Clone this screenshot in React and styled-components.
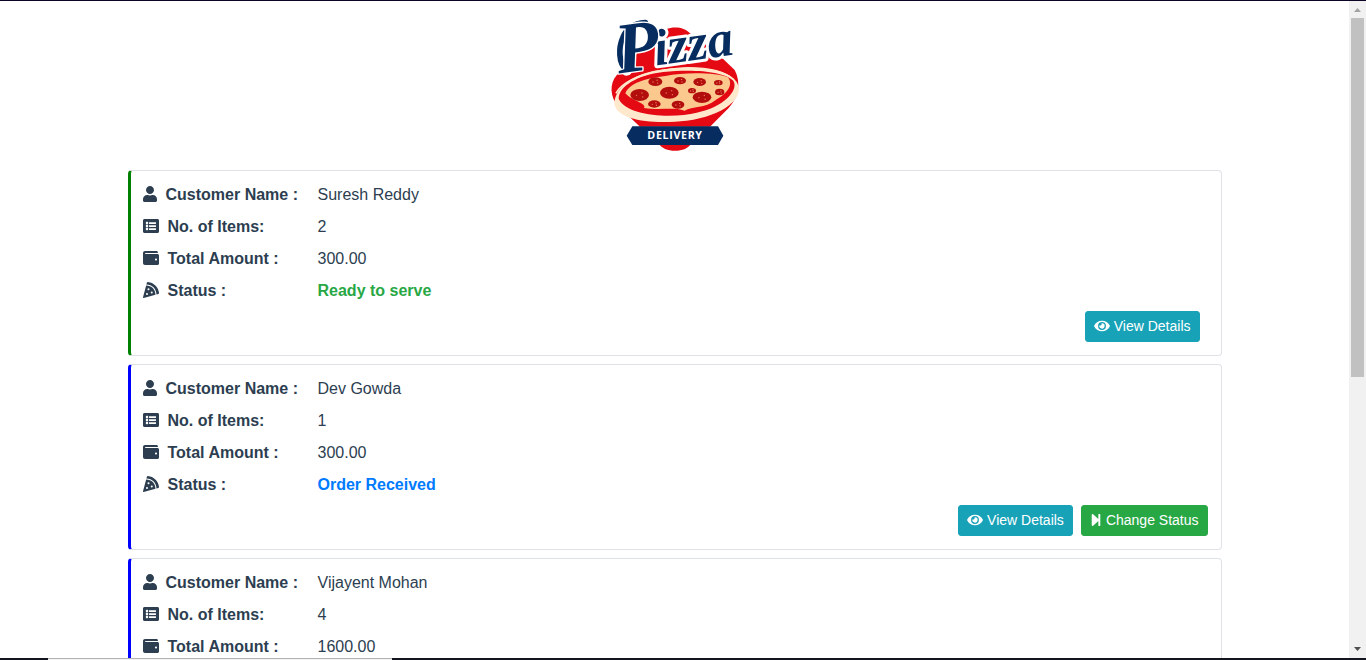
import React from "react";
import styled, { createGlobalStyle, css } from "styled-components";
import {
  FaUser,
  FaListAlt,
  FaWallet,
  FaPizzaSlice,
  FaEye,
  FaStepForward,
} from "react-icons/fa";

const GlobalStyle = createGlobalStyle`
  *, *::before, *::after { box-sizing: border-box; }
  body {
    margin: 0;
    background: #fff;
    color: #2c3e50;
    font: 16px/24px "Liberation Sans", Arial, sans-serif;
  }
`;

const Screen = styled.div`
  display: flex;
  flex-direction: column;
  height: 100vh;
  border-top: 1px solid #0c0325;
`;

const Body = styled.div`
  display: flex;
  flex: 1;
  min-height: 0;
`;

const Page = styled.main`
  flex: 1;
  min-width: 0;
  overflow-y: auto;
  scrollbar-width: none;
`;

const Brand = styled.header`
  display: flex;
  justify-content: center;
  padding: 9px 0 10px;
`;

const LogoArt = styled.svg`
  display: block;
  width: 150px;
  height: 150px;
`;

const Orders = styled.section`
  display: flex;
  flex-direction: column;
  gap: 8px;
  max-width: 1140px;
  margin: 0 auto;
  padding: 0 23px 8px;
`;

const accents = { ready: "#008000", received: "#0000ff" };
const statusColors = { ready: "#28a745", received: "#007bff" };

const iconStyle = css`
  svg {
    display: block;
    flex: none;
    width: ${(p) => p.$iconWidth || 16}px;
    height: 1em;
    margin-top: 3px;
  }
`;

const Card = styled.article`
  padding: 12px 13px 13px 12px;
  border: 1px solid #dee2e6;
  border-left: 3px solid ${(p) => accents[p.$state]};
  border-radius: 4px;
`;

const Fields = styled.dl`
  margin: 0;
`;

const Field = styled.div`
  display: flex;
  padding-bottom: 8px;
`;

const Label = styled.dt`
  display: flex;
  align-items: flex-start;
  gap: 9px;
  width: 175px;
  font-weight: 700;
  ${iconStyle}
`;

const Value = styled.dd`
  margin: 0;
  ${(p) =>
    p.$state &&
    css`
      color: ${statusColors[p.$state]};
      font-weight: 700;
    `}
`;

const Actions = styled.div`
  display: flex;
  justify-content: flex-end;
`;

const Button = styled.button`
  display: flex;
  align-items: flex-start;
  gap: 4px;
  padding: 4px 8px;
  border: 1px solid ${(p) => p.$color};
  border-radius: 3px;
  background: ${(p) => p.$color};
  color: #fff;
  font: 14px/21px "Liberation Sans", Arial, sans-serif;
  cursor: pointer;
  ${iconStyle}
`;

const DetailsButton = styled(Button)`
  margin-right: 8px;
`;

const ScrollTrack = styled.div`
  display: flex;
  flex-direction: column;
  align-items: center;
  width: 17px;
  background: #f1f1f1;
`;

const ScrollArrow = styled.svg`
  display: block;
  width: 17px;
  height: 17px;
  fill: ${(p) => p.$color};
`;

const ScrollLane = styled.div`
  flex: 1;
  width: 13px;
`;

const ScrollThumb = styled.div`
  height: 57.6%;
  background: #c1c1c1;
`;

const BottomEdge = styled.div`
  display: flex;
  height: 2px;
  background: #14161f;
`;

const BottomTab = styled.div`
  width: 344px;
  margin-left: 48px;
  border-top: 1px solid #b4b4b4;
  background: #f3f3f3;
`;

const pepperoni = [
  [166, 215, 21, 13],
  [240, 212, 18, 11],
  [299, 216, 19, 12],
  [355, 218, 13, 8],
  [119, 255, 28, 18],
  [208, 248, 28, 18],
  [276, 242, 12, 8],
  [359, 246, 14, 10],
  [306, 262, 28, 17],
  [163, 282, 19, 11],
  [234, 284, 19, 12],
];

function Logo() {
  return (
    <LogoArt viewBox="0 0 450 450" role="img" aria-label="Pizza Delivery">
      <path
        fill="#e50914"
        d="M178 72C196 48 248 44 270 70L350 128L404 180C424 218 416 262 386 294L330 350H120L54 288C30 262 28 220 50 196L130 110Z"
      />
      <path fill="#e50914" d="M176 400H274C260 430 190 430 176 400Z" />
      <path
        fill="#ffe8cb"
        d="M43 282C44 236 95 192 178 180C270 166 382 172 410 216C440 262 370 318 260 332C160 344 52 332 43 282Z"
      />
      <path
        fill="#e50914"
        d="M56 266C58 228 110 196 190 186C280 176 374 184 400 212C418 242 368 292 290 308C220 326 80 320 56 266Z"
      />
      <path
        fill="none"
        stroke="#ffe8cb"
        strokeWidth="5"
        d="M48 250C72 204 164 178 248 174C318 172 374 184 402 210"
      />
      <path
        fill="#fbc88e"
        d="M76 250C88 220 136 204 196 198C256 186 350 188 384 202C402 226 380 252 344 272C318 294 276 288 254 302C218 290 182 302 132 294C142 280 94 272 76 250Z"
      />
      {pepperoni.map(([x, y, rx, ry]) => (
        <g key={`${x}-${y}`}>
          <ellipse cx={x} cy={y} rx={rx} ry={ry} fill="#b30e0e" />
          <g fill="#ef7a55">
            <circle cx={x - rx / 3} cy={y + 1} r="2" />
            <circle cx={x + rx / 4} cy={y - ry / 3} r="2" />
            <circle cx={x + rx / 3} cy={y + ry / 3} r="2" />
          </g>
        </g>
      ))}
      <g fill="none" strokeLinecap="round">
        <path
          stroke="#fff"
          strokeWidth="34"
          d="M80 180C54 160 56 112 68 84C80 54 106 40 136 38"
        />
        <path
          stroke="#062c60"
          strokeWidth="17"
          d="M80 180C54 160 56 112 68 84C80 54 106 40 136 38"
        />
      </g>
      <g
        transform="rotate(-8 60 190)"
        fill="#062c60"
        stroke="#fff"
        strokeWidth="18"
        strokeLinejoin="round"
        paintOrder="stroke"
        fontFamily="'Liberation Serif', 'Times New Roman', serif"
        fontStyle="italic"
        fontWeight="700"
      >
        <text x="170" y="182" fontSize="154">
          izza
        </text>
        <text x="56" y="190" fontSize="216" strokeWidth="8">
          P
        </text>
      </g>
      <path fill="#062c60" d="M97 349H354L370 377L354 405H97L80 377Z" />
      <text
        x="225"
        y="388"
        textAnchor="middle"
        fill="#fff"
        fontFamily="'Open Sans', sans-serif"
        fontSize="32"
        fontWeight="700"
        letterSpacing="2"
      >
        DELIVERY
      </text>
    </LogoArt>
  );
}

const orders = [
  { name: "Suresh Reddy", items: 2, total: "300.00", status: "Ready to serve", state: "ready" },
  { name: "Dev Gowda", items: 1, total: "300.00", status: "Order Received", state: "received" },
  { name: "Vijayent Mohan", items: 4, total: "1600.00", status: "Order Received", state: "received" },
];

function OrderCard({ order }) {
  return (
    <Card $state={order.state}>
      <Fields>
        <Field>
          <Label $iconWidth={14}><FaUser />Customer Name :</Label>
          <Value>{order.name}</Value>
        </Field>
        <Field>
          <Label><FaListAlt />No. of Items:</Label>
          <Value>{order.items}</Value>
        </Field>
        <Field>
          <Label><FaWallet />Total Amount :</Label>
          <Value>{order.total}</Value>
        </Field>
        <Field>
          <Label><FaPizzaSlice />Status :</Label>
          <Value $state={order.state}>{order.status}</Value>
        </Field>
      </Fields>
      <Actions>
        <DetailsButton type="button" $color="#17a2b8">
          <FaEye />View Details
        </DetailsButton>
        {order.state !== "ready" && (
          <Button type="button" $color="#28a745" $iconWidth={12}>
            <FaStepForward />Change Status
          </Button>
        )}
      </Actions>
    </Card>
  );
}

export default function App() {
  return (
    <Screen>
      <GlobalStyle />
      <Body>
        <Page>
          <Brand>
            <Logo />
          </Brand>
          <Orders>
            {orders.map((order) => (
              <OrderCard key={order.name} order={order} />
            ))}
          </Orders>
        </Page>
        <ScrollTrack aria-hidden="true">
          <ScrollArrow viewBox="0 0 17 17" $color="#a3a3a3">
            <path d="M5 11L8.500 7L12 11Z" />
          </ScrollArrow>
          <ScrollLane>
            <ScrollThumb />
          </ScrollLane>
          <ScrollArrow viewBox="0 0 17 17" $color="#505050">
            <path d="M5 6L8.500 10L12 6Z" />
          </ScrollArrow>
        </ScrollTrack>
      </Body>
      <BottomEdge>
        <BottomTab />
      </BottomEdge>
    </Screen>
  );
}
